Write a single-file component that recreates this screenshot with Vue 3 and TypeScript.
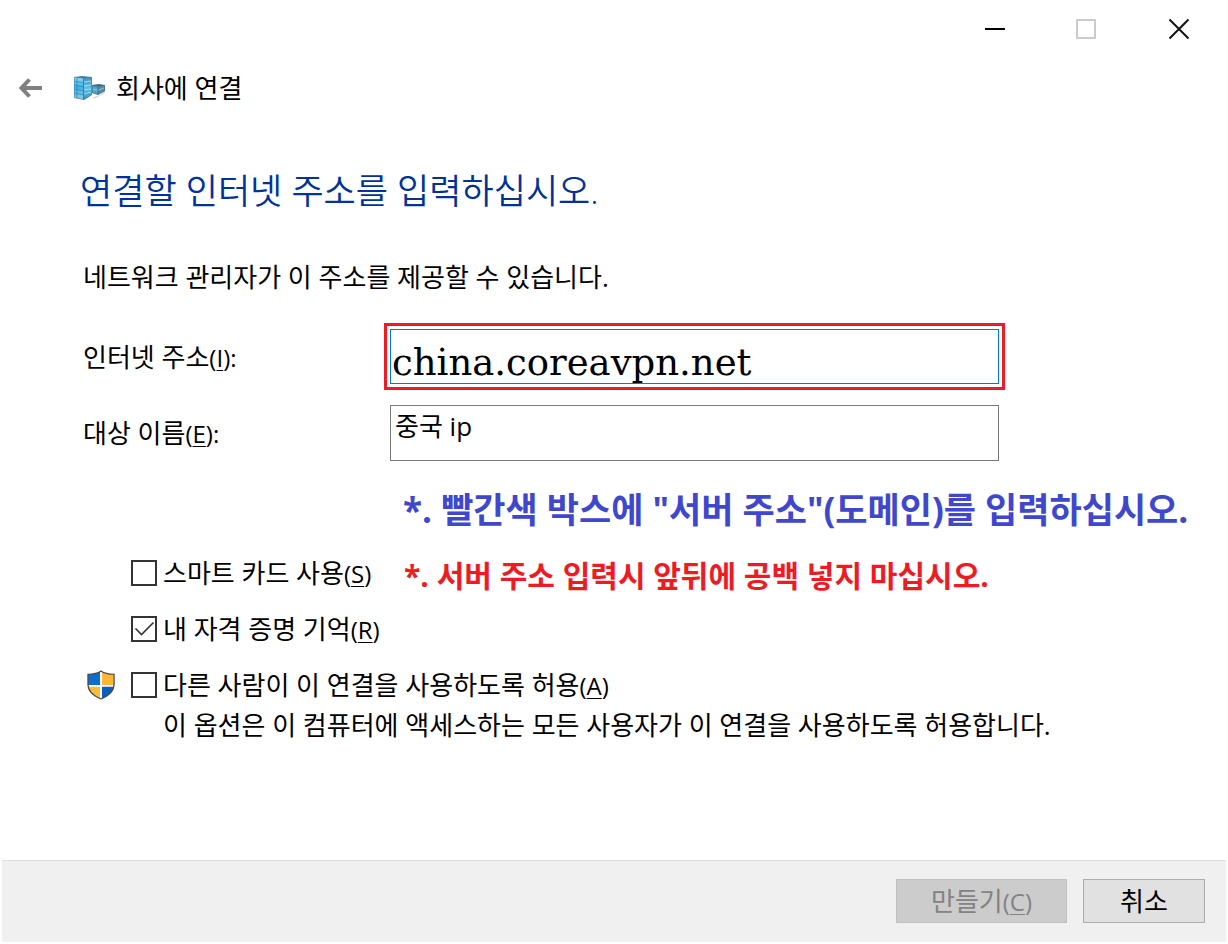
<script setup lang="ts">
import { ref } from 'vue'

const address = ref('china.coreavpn.net')
const destination = ref('중국 ip')
const useSmartCard = ref(false)
const rememberCredentials = ref(true)
const allowOthers = ref(false)
</script>

<template>
  <div class="window">
    <div class="titlebar">
      <button type="button" class="caption" aria-label="최소화">
        <svg width="22" height="22" viewBox="0 0 22 22"><path d="M1 11H21" stroke="#000" stroke-width="2" /></svg>
      </button>
      <button type="button" class="caption" aria-label="최대화" disabled>
        <svg width="22" height="22" viewBox="0 0 22 22"><rect x="1" y="2" width="18" height="18" fill="none" stroke="#cbcbcb" stroke-width="2" /></svg>
      </button>
      <button type="button" class="caption" aria-label="닫기">
        <svg width="22" height="22" viewBox="0 0 22 22"><path d="M1.500 1.500L20.500 20.500M20.500 1.500L1.500 20.500" stroke="#111" stroke-width="2" /></svg>
      </button>
    </div>

    <header class="header">
      <button type="button" class="back" aria-label="뒤로">
        <svg width="24" height="20" viewBox="0 0 24 20"><path d="M10.500 1.500L2.500 10L10.500 18.500M3 10H23" fill="none" stroke="#808080" stroke-width="4" /></svg>
      </button>
      <svg class="server" width="34" height="26" viewBox="0 0 34 26">
        <defs>
          <linearGradient id="side" x1="0" y1="0" x2="0" y2="1">
            <stop offset="0" stop-color="#8fd6f2" />
            <stop offset="0.45" stop-color="#3fb2e4" />
            <stop offset="1" stop-color="#8cc9e2" />
          </linearGradient>
          <linearGradient id="front" x1="0" y1="0" x2="0" y2="1">
            <stop offset="0" stop-color="#4a93b8" />
            <stop offset="0.5" stop-color="#5cc0ea" />
            <stop offset="1" stop-color="#3b93c2" />
          </linearGradient>
        </defs>
        <path d="M20 22L27 20L33 14L31 19L21 24Z" fill="#d9dde0" />
        <path d="M1 2L9 1L19 2V20L11 25L1 23Z" fill="#427f9f" />
        <path d="M1.500 2.500L10 3.500V24L1.500 22.500Z" fill="url(#side)" />
        <path d="M11 3.500L18.500 2.500V19.500L11 24Z" fill="url(#front)" />
        <path d="M2 6.500L10 7.500M2 10.500L10 11.500M2 14.500L10 15.500M2 18.500L10 19.500M4 3V23" fill="none" stroke="#2486b8" stroke-width="0.7" />
        <path d="M11 7L18 6M11 11L18 10M11 15L18 14M11 19L18 17" fill="none" stroke="#b4e4f6" stroke-width="0.8" />
        <path d="M19 10L26 9L32 10V16L25 20L19 18Z" fill="#3d6c86" />
        <path d="M19.500 11L24.500 11.500V19L19.500 17.500Z" fill="#4ba8d2" />
        <path d="M25.500 11.500L31.500 10.500V15.500L25.500 19Z" fill="#5c879d" />
        <path d="M20 14L24.500 15M25.500 15L31 13" fill="none" stroke="#9ad2e8" stroke-width="0.8" />
      </svg>
      <span class="name">회사에 연결</span>
    </header>

    <main class="content">
      <h1>연결할 인터넷 주소를 입력하십시오.</h1>
      <p class="intro">네트워크 관리자가 이 주소를 제공할 수 있습니다.</p>

      <div class="fields">
        <label for="address">인터넷 주소<span class="key">(<u>I</u>):</span></label>
        <div class="highlight">
          <input id="address" v-model="address" type="text" class="address" spellcheck="false" />
        </div>
        <label for="destination">대상 이름<span class="key">(<u>E</u>):</span></label>
        <input id="destination" v-model="destination" type="text" class="destination" spellcheck="false" />
      </div>

      <p class="note note-blue">*. 빨간색 박스에 "서버 주소"(도메인)를 입력하십시오.</p>

      <div class="options">
        <div class="option">
          <label class="check">
            <input v-model="useSmartCard" type="checkbox" />
            <span>스마트 카드 사용<span class="key">(<u>S</u>)</span></span>
          </label>
          <p class="note note-red">*. 서버 주소 입력시 앞뒤에 공백 넣지 마십시오.</p>
        </div>
        <div class="option">
          <label class="check">
            <input v-model="rememberCredentials" type="checkbox" />
            <span>내 자격 증명 기억<span class="key">(<u>R</u>)</span></span>
            <svg v-if="rememberCredentials" class="tick" width="26" height="26" viewBox="0 0 26 26"><path d="M4.500 12.500L10.500 18.500L22.500 6.500" fill="none" stroke="#333" stroke-width="1.600" /></svg>
          </label>
        </div>
        <div class="option">
          <svg class="shield" width="28" height="30" viewBox="0 0 30 32">
            <defs>
              <clipPath id="shield-shape"><path d="M15 1C11.500 3.500 6 4.500 1 4.500V15C1 22 6 27.500 15 31C24 27.500 29 22 29 15V4.500C24 4.500 18.500 3.500 15 1Z" /></clipPath>
            </defs>
            <g clip-path="url(#shield-shape)">
              <path d="M0 0H15V16H0Z" fill="#0c6fce" />
              <path d="M15 0H30V16H15Z" fill="#fdb735" />
              <path d="M0 16H15V32H0Z" fill="#fdbb3c" />
              <path d="M15 16H30V32H15Z" fill="#0a5fbd" />
              <path d="M15 0V32M0 17H30" stroke="#fff" stroke-width="2" />
            </g>
            <path d="M15 1C11.500 3.500 6 4.500 1 4.500V15C1 22 6 27.500 15 31C24 27.500 29 22 29 15V4.500C24 4.500 18.500 3.500 15 1Z" fill="none" stroke="#4a4a4a" stroke-width="1.300" />
          </svg>
          <label class="check">
            <input v-model="allowOthers" type="checkbox" aria-describedby="allow-help" />
            <span>다른 사람이 이 연결을 사용하도록 허용<span class="key">(<u>A</u>)</span></span>
          </label>
        </div>
        <p id="allow-help" class="help">이 옵션은 이 컴퓨터에 액세스하는 모든 사용자가 이 연결을 사용하도록 허용합니다.</p>
      </div>
    </main>

    <footer class="footer">
      <button type="button" class="action create" disabled>만들기<span class="key">(<u>C</u>)</span></button>
      <button type="button" class="action cancel">취소</button>
    </footer>
  </div>
</template>

<style>
body {
  margin: 0;
  background: #fff;
}
</style>

<style scoped>
.window {
  box-sizing: border-box;
  min-height: 100vh;
  display: flex;
  flex-direction: column;
  padding: 0 2px 2px;
  color: #000;
  font-family: "Open Sans", "Noto Sans CJK KR", sans-serif;
  font-size: 26px;
  line-height: 36px;
}

h1,
p {
  margin: 0;
  font-weight: 400;
}

button,
input {
  box-sizing: border-box;
  margin: 0;
  padding: 0;
  border: 0;
  border-radius: 0;
  color: inherit;
  font: inherit;
}

u {
  text-decoration-thickness: 1px;
  text-underline-offset: 3px;
}

.key {
  font-size: 24px;
  line-height: 24px;
}

.titlebar {
  display: flex;
  justify-content: flex-end;
  padding-right: 1px;
}

.caption {
  width: 92px;
  height: 58px;
  display: grid;
  place-items: center;
  background: none;
}

.header {
  display: flex;
  align-items: center;
  height: 60px;
  padding-left: 17px;
}

.back {
  display: flex;
  background: none;
}

.server {
  margin-left: 30px;
}

.name {
  margin-left: 9px;
}

.content {
  flex: 1;
  padding: 49px 40px 24px 81px;
}

h1 {
  margin-left: -3px;
  color: #003399;
  font-size: 35px;
  font-weight: 350;
  line-height: 48px;
}

.intro {
  margin-top: 44px;
}

.fields {
  display: grid;
  grid-template-columns: 301px minmax(0, 1fr);
  row-gap: 15px;
  align-items: center;
  margin: 28px 181px 0 0;
}

.highlight {
  padding: 3px;
  border: 3px solid #ed1c24;
}

.address,
.destination {
  display: block;
  height: 56px;
  background: #fff;
  outline: none;
}

.address {
  width: 100%;
  height: 55px;
  padding: 12px 1px 0;
  border: 1px solid #0078d7;
  font-family: "DejaVu Serif", serif;
  font-size: 37px;
}

.destination {
  margin: 0 6px;
  padding: 0 4px 16px;
  border: 1px solid #7a7a7a;
}

.note {
  font-weight: 700;
  white-space: nowrap;
}

.note-blue {
  margin: 25px 0 0 320px;
  color: #3f48cc;
  font-size: 35px;
  line-height: 48px;
}

.note-red {
  padding-top: 6px;
  color: #ed1c24;
  font-size: 30px;
}

.options {
  margin: 18px 0 0 4px;
}

.option {
  display: grid;
  grid-template-columns: 44px minmax(273px, max-content) 1fr;
  align-items: center;
  height: 42px;
  margin-bottom: 14px;
}

.option:nth-child(3) {
  margin-bottom: 1px;
}

.check {
  position: relative;
  grid-column: 2;
  display: flex;
  align-items: center;
  gap: 6px;
  white-space: nowrap;
}

.check input {
  appearance: none;
  width: 26px;
  height: 26px;
  border: 2px solid #333;
  background: #fff;
}

.tick {
  position: absolute;
  left: 0;
  pointer-events: none;
}

.help {
  margin-left: 76px;
}

.footer {
  display: flex;
  justify-content: flex-end;
  gap: 16px;
  padding: 18px 21px 19px;
  border-top: 1px solid #dfdfdf;
  background: #f0f0f0;
}

.action {
  height: 44px;
  border: 1px solid #adadad;
  background: #e1e1e1;
}

.create {
  width: 171px;
  border-color: #bfbfbf;
  background: #ccc;
  color: #838383;
}

.cancel {
  width: 122px;
}
</style>
